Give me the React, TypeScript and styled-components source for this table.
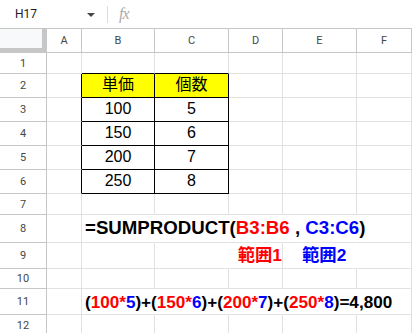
import React from 'react';
import styled, { createGlobalStyle } from 'styled-components';

const GlobalStyle = createGlobalStyle`
  body {
    margin: 0;
    background: #fff;
    font-family: "Liberation Sans", Arial, "Noto Sans CJK JP", sans-serif;
  }
`;

const HEAD = '#c4c7c5';
const LIGHT = '#e1e1e1';
const LETTERS = ['A', 'B', 'C', 'D', 'E', 'F'];

// widths include the 1px right border
const COL_WIDTHS = '47px 35px 73px 74px 54px 74px minmax(0, 1fr)';

type RowDef = { height: number; pb: number };

const ROWS: RowDef[] = [
  { height: 21, pb: 3 },
  { height: 24, pb: 4 },
  { height: 24, pb: 4 },
  { height: 24, pb: 4 },
  { height: 24, pb: 4 },
  { height: 24, pb: 4 },
  { height: 21, pb: 3 },
  { height: 28, pb: 4 },
  { height: 26, pb: 4 },
  { height: 20, pb: 3 },
  { height: 26, pb: 3 },
  { height: 21, pb: 3 },
];

type CellSpec = {
  text?: React.ReactNode;
  align?: 'left' | 'center' | 'right';
  pad?: number;
  size?: number;
  bold?: boolean;
  fill?: string;
  open?: boolean; // text runs over the right edge, so no grid line
};

const Red = styled.span`
  color: #ff0000;
`;

const Blue = styled.span`
  color: #0000ff;
`;

const product = (a: string, b: string) => (
  <>
    (<Red>{a}*</Red>
    <Blue>{b}</Blue>)
  </>
);

const CELLS: Record<string, CellSpec> = {
  B2: { text: '単価', align: 'center', size: 16, fill: '#ffff00' },
  C2: { text: '個数', align: 'center', size: 16, fill: '#ffff00' },
  B3: { text: '100', align: 'center', size: 16 },
  C3: { text: '5', align: 'center', size: 16 },
  B4: { text: '150', align: 'center', size: 16 },
  C4: { text: '6', align: 'center', size: 16 },
  B5: { text: '200', align: 'center', size: 16 },
  C5: { text: '7', align: 'center', size: 16 },
  B6: { text: '250', align: 'center', size: 16 },
  C6: { text: '8', align: 'center', size: 16 },
  B8: {
    text: (
      <>
        =SUMPRODUCT(<Red>B3:B6</Red>{' , '}<Blue>C3:C6</Blue>)
      </>
    ),
    size: 18.67,
    bold: true,
    pad: 3,
    open: true,
  },
  C8: { open: true },
  D8: { open: true },
  E8: { open: true },
  C9: { open: true },
  D9: { text: <Red>範囲1</Red>, align: 'right', size: 17.33, bold: true, pad: 0 },
  E9: { text: <Blue>範囲2</Blue>, size: 17.33, bold: true, pad: 19, open: true },
  B11: {
    text: (
      <>
        {product('100', '5')}+{product('150', '6')}+{product('200', '7')}+{product('250', '8')}=4,800
      </>
    ),
    size: 17.1,
    bold: true,
    pad: 3,
    open: true,
  },
  C11: { open: true },
  D11: { open: true },
  E11: { open: true },
};

const boxed = (row: number, col: number) => row >= 2 && row <= 6 && (col === 2 || col === 3);

const App: React.FC = () => {
  return (
    <>
      <GlobalStyle />
      <Page>
        <Toolbar>
          <NameBox>H17</NameBox>
          <Caret />
          <Divider />
          <Fx>fx</Fx>
        </Toolbar>
        <Sheet $rows={ROWS.map(r => `${r.height}px`).join(' ')}>
          <Corner />
          {LETTERS.map(l => (
            <ColHead key={l}>{l}</ColHead>
          ))}
          {ROWS.map((row, i) => {
            const r = i + 1;
            return (
              <React.Fragment key={r}>
                <RowHead>{r}</RowHead>
                {LETTERS.map((l, j) => {
                  const c = j + 1;
                  const spec = CELLS[`${l}${r}`] ?? {};
                  const right = boxed(r, c) || boxed(r, c + 1) ? '#000' : spec.open ? 'transparent' : LIGHT;
                  const bottom = boxed(r, c) || boxed(r + 1, c) ? '#000' : LIGHT;
                  return (
                    <Cell
                      key={l}
                      $right={right}
                      $bottom={bottom}
                      $fill={spec.fill}
                      $align={spec.align ?? 'left'}
                      $pad={spec.pad ?? 3}
                      $pb={row.pb}
                      $size={spec.size ?? 13}
                      $bold={spec.bold}
                    >
                      {spec.text && <Value>{spec.text}</Value>}
                    </Cell>
                  );
                })}
              </React.Fragment>
            );
          })}
        </Sheet>
      </Page>
    </>
  );
};

export default App;

const Page = styled.div`
  width: 412px;
  height: 333px;
  overflow: hidden;
  background: #fff;
`;

const Toolbar = styled.div`
  display: flex;
  align-items: center;
  height: 28px;
  border-bottom: 1px solid ${HEAD};
  font-family: Roboto, "Liberation Sans", sans-serif;
`;

const NameBox = styled.div`
  width: 72px;
  padding-left: 15px;
  font-size: 12px;
  color: #202124;
`;

const Caret = styled.div`
  width: 0;
  height: 0;
  border-left: 4px solid transparent;
  border-right: 4px solid transparent;
  border-top: 4px solid #444746;
  margin-top: 1px;
`;

const Divider = styled.div`
  width: 1px;
  height: 17px;
  margin-left: 12px;
  background: #dadce0;
`;

const Fx = styled.div`
  margin-left: 11px;
  font-family: "Liberation Serif", serif;
  font-style: italic;
  font-size: 16px;
  letter-spacing: -1px;
  color: #a9abab;
`;

const Sheet = styled.div<{ $rows: string }>`
  display: grid;
  grid-template-columns: ${COL_WIDTHS};
  grid-template-rows: 24px ${p => p.$rows};
`;

const Corner = styled.div`
  box-sizing: border-box;
  background: #f8f9fa;
  border-right: 5px solid #c7c7c7;
  border-bottom: 5px solid #c7c7c7;
`;

const ColHead = styled.div`
  box-sizing: border-box;
  display: flex;
  align-items: center;
  justify-content: center;
  border-right: 1px solid ${HEAD};
  border-bottom: 1px solid ${HEAD};
  font-family: Roboto, "Liberation Sans", sans-serif;
  font-size: 11px;
  color: #444746;
`;

const RowHead = styled(ColHead)``;

const Cell = styled.div<{
  $right: string;
  $bottom: string;
  $fill?: string;
  $align: 'left' | 'center' | 'right';
  $pad: number;
  $pb: number;
  $size: number;
  $bold?: boolean;
}>`
  box-sizing: border-box;
  min-width: 0;
  display: flex;
  align-items: flex-end;
  justify-content: ${p => (p.$align === 'center' ? 'center' : p.$align === 'right' ? 'flex-end' : 'flex-start')};
  padding: 0 ${p => p.$pad}px ${p => p.$pb}px;
  border-right: 1px solid ${p => p.$right};
  border-bottom: 1px solid ${p => p.$bottom};
  background: ${p => p.$fill ?? 'transparent'};
  font-size: ${p => p.$size}px;
  font-weight: ${p => (p.$bold ? 700 : 400)};
  line-height: 1;
  color: #000;
  white-space: nowrap;
`;

const Value = styled.span`
  white-space: pre;
`;
